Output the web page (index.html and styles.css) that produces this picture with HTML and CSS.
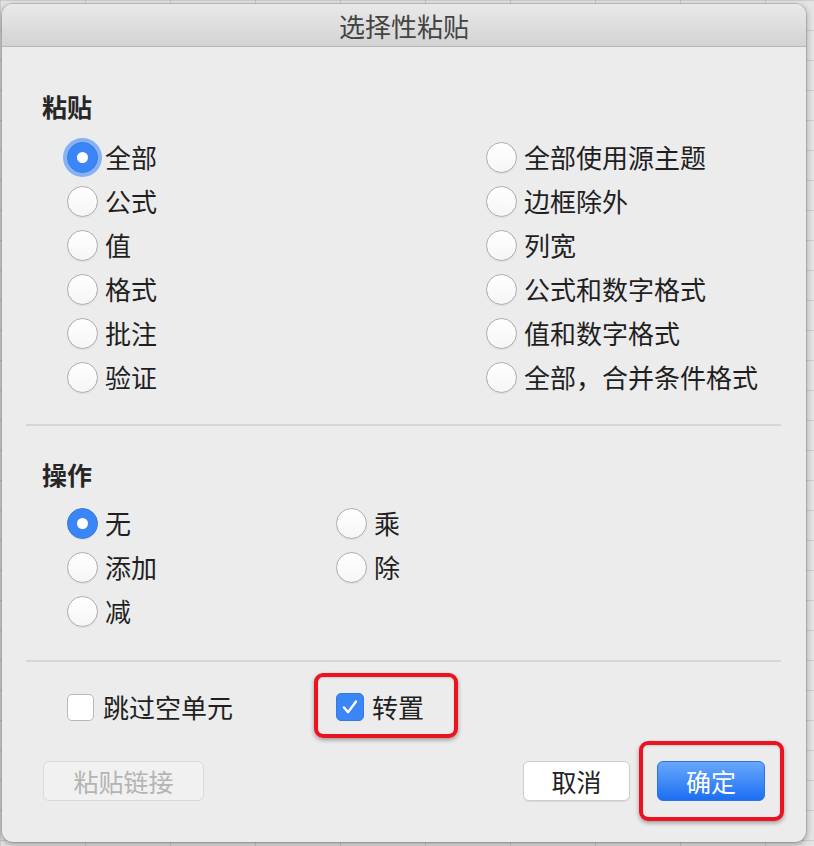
FILE: index.html
```html
<!DOCTYPE html>
<html lang="zh-CN">
<head>
<meta charset="utf-8">
<title>选择性粘贴</title>
<link rel="stylesheet" href="styles.css">
</head>
<body>
<div class="desk">
  <div class="dialog">
    <div class="titlebar">选择性粘贴</div>
    <div class="content">
      <section class="group">
        <div class="heading">粘贴</div>
        <div class="options paste">
          <label class="opt"><span class="radio on focus"></span><span>全部</span></label>
          <label class="opt"><span class="radio"></span><span>全部使用源主题</span></label>
          <label class="opt"><span class="radio"></span><span>公式</span></label>
          <label class="opt"><span class="radio"></span><span>边框除外</span></label>
          <label class="opt"><span class="radio"></span><span>值</span></label>
          <label class="opt"><span class="radio"></span><span>列宽</span></label>
          <label class="opt"><span class="radio"></span><span>格式</span></label>
          <label class="opt"><span class="radio"></span><span>公式和数字格式</span></label>
          <label class="opt"><span class="radio"></span><span>批注</span></label>
          <label class="opt"><span class="radio"></span><span>值和数字格式</span></label>
          <label class="opt"><span class="radio"></span><span>验证</span></label>
          <label class="opt"><span class="radio"></span><span>全部，合并条件格式</span></label>
        </div>
      </section>
      <div class="sep sep-1"></div>
      <section class="group">
        <div class="heading heading-op">操作</div>
        <div class="options ops">
          <label class="opt"><span class="radio on"></span><span>无</span></label>
          <label class="opt"><span class="radio"></span><span>乘</span></label>
          <label class="opt"><span class="radio"></span><span>添加</span></label>
          <label class="opt"><span class="radio"></span><span>除</span></label>
          <label class="opt"><span class="radio"></span><span>减</span></label>
        </div>
      </section>
      <div class="sep sep-2"></div>
      <div class="options checks">
        <label class="opt"><span class="check"></span><span>跳过空单元</span></label>
        <label class="opt mark-transpose"><span class="check on"><svg viewBox="0 0 28 28" width="28" height="28"><path d="M7.5 14.5 L12 19.5 L20.5 8" fill="none" stroke="#fff" stroke-width="2.6" stroke-linecap="round" stroke-linejoin="round"/></svg></span><span>转置</span></label>
      </div>
      <div class="buttons">
        <button class="btn btn-disabled" disabled>粘贴链接</button>
        <div class="btn-group">
          <button class="btn btn-cancel">取消</button>
          <button class="btn btn-ok mark-ok">确定</button>
        </div>
      </div>
    </div>
  </div>
</div>
</body>
</html>
```

FILE: styles.css
```css
*, *::before, *::after { box-sizing: border-box; }

html, body {
  margin: 0;
  padding: 0;
}

body {
  width: 814px;
  height: 846px;
  overflow: hidden;
  font-family: "Noto Sans CJK SC", "Noto Sans", sans-serif;
  color: #232323;
  background-color: #e4e4e4;
  background-image:
    linear-gradient(to right, rgba(0,0,0,0.10) 1px, transparent 1px),
    linear-gradient(to bottom, rgba(0,0,0,0.10) 1px, transparent 1px);
  background-size: 85px 100%, 100% 30px;
}

.desk {
  padding: 4px 8px 4px 2px;
}

.dialog {
  width: 804px;
  height: 838px;
  background: #ececec;
  border-radius: 11px;
  box-shadow: 0 0 0 1px rgba(0,0,0,0.12), 0 2px 7px rgba(0,0,0,0.35);
  overflow: hidden;
  display: flex;
  flex-direction: column;
}

.titlebar {
  height: 43px;
  flex: none;
  border-bottom: 1px solid #b8b8b8;
  background: linear-gradient(#e9e9e9, #d3d3d3);
  display: flex;
  align-items: center;
  justify-content: center;
  font-size: 26px;
  line-height: 30px;
  color: #444;
  padding-top: 2px;
}

.content {
  padding: 0 25px 0 24px;
  flex: 1;
}

.heading {
  margin: 44px 0 0 16px;
  font-size: 25px;
  line-height: 30px;
  font-weight: 700;
  color: #262626;
}

.heading-op {
  margin-top: 33px;
}

.options {
  display: grid;
  margin-left: 41px;
  grid-auto-rows: 44px;
}

.paste {
  margin-top: 14px;
  grid-template-columns: 419px 1fr;
}

.ops {
  margin-top: 12px;
  grid-template-columns: 269px 1fr;
}

.checks {
  margin-top: 23px;
  grid-template-columns: 269px 1fr;
}

.opt {
  display: flex;
  align-items: center;
  gap: 7px;
  font-size: 26px;
  line-height: 30px;
  white-space: nowrap;
  position: relative;
  color: #1f1f1f;
}

.radio {
  flex: none;
  width: 31px;
  height: 31px;
  border-radius: 50%;
  border: 1px solid #aeaeae;
  background: linear-gradient(#ffffff, #f6f6f6);
  box-shadow: 0 1px 1px rgba(0,0,0,0.06);
  position: relative;
}

.radio.on {
  background: #3b86f7;
  border-color: #3479e6;
}

.radio.on::after {
  content: "";
  position: absolute;
  left: 50%;
  top: 50%;
  width: 11px;
  height: 11px;
  margin: -5.5px 0 0 -5.5px;
  border-radius: 50%;
  background: #fff;
}

.radio.focus {
  box-shadow: 0 0 0 4px #86b2f4;
}

.check {
  flex: none;
  width: 27px;
  height: 27px;
  border-radius: 5px;
  border: 1px solid #b8b8b8;
  background: #fff;
  margin-right: 2px;
  display: flex;
  align-items: center;
  justify-content: center;
}

.check.on {
  width: 28px;
  height: 28px;
  background: #3b86f7;
  border-color: #3479e6;
  margin-right: 1px;
}

.check svg { display: block; }

.sep {
  height: 2px;
  background: #d7d7d7;
}

.sep-1 { margin-top: 25px; }
.sep-2 { margin-top: 27px; }

.buttons {
  margin: 32px 16px 0 17px;
  display: flex;
  justify-content: space-between;
  align-items: center;
}

.btn-group {
  display: flex;
  gap: 27px;
}

.btn {
  height: 40px;
  border-radius: 6px;
  font-family: inherit;
  font-size: 25px;
  line-height: 30px;
  padding: 0;
  display: flex;
  align-items: center;
  justify-content: center;
  position: relative;
}

.btn-disabled {
  width: 161px;
  background: #f1f1f1;
  border: 1px solid #d9d9d9;
  color: #b4b4b4;
}

.btn-cancel {
  width: 107px;
  background: #ffffff;
  border: 1px solid #cdcdcd;
  color: #222;
  box-shadow: 0 1px 1px rgba(0,0,0,0.08);
}

.btn-ok {
  width: 108px;
  background: linear-gradient(#69a8fb, #1c6ef3);
  border: 1px solid #2b73e6;
  color: #fff;
}

/* red annotation frames */
.mark-transpose::after,
.mark-ok::after {
  content: "";
  position: absolute;
  border: 4px solid #ec1320;
  border-radius: 9px;
  box-shadow: 0 2px 4px rgba(0,0,0,0.35), inset 0 1px 2px rgba(0,0,0,0.15);
  pointer-events: none;
}

.mark-transpose::after {
  left: -22px;
  top: -12px;
  width: 144px;
  height: 65px;
}

.mark-ok::after {
  left: -19px;
  top: -21px;
  width: 145px;
  height: 80px;
}
```
